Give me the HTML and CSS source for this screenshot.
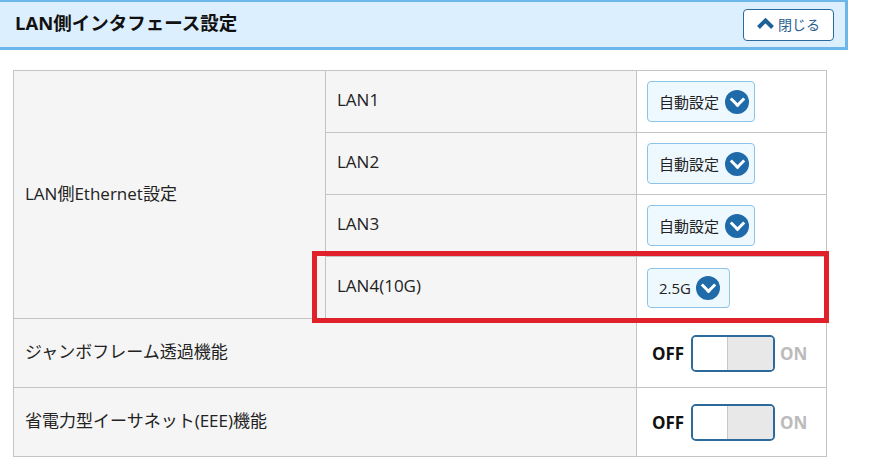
FILE: index.html
```html
<!DOCTYPE html>
<html lang="ja">
<head>
    <meta charset="UTF-8">
    <meta name="viewport" content="width=device-width, initial-scale=1.0">
    <title>LAN側インタフェース設定</title>
    <link rel="stylesheet" href="styles.css">
</head>
<body>

    <div class="section-head">
        <h2>LAN側インタフェース設定</h2>
        <button class="close-btn" type="button">
            <svg width="17" height="11" viewBox="0 0 17 11"><path d="M1.5 9.5 L8.5 2.5 L15.5 9.5" fill="none" stroke="#1f5f98" stroke-width="4"/></svg>
            閉じる
        </button>
    </div>

    <div class="settings">
        <table class="setting-table">
            <tr>
                <th rowspan="4" class="label">LAN側Ethernet設定</th>
                <th class="sub">LAN1</th>
                <td class="value"><span class="select">自動設定<i class="arrow"></i></span></td>
            </tr>
            <tr>
                <th class="sub">LAN2</th>
                <td class="value"><span class="select">自動設定<i class="arrow"></i></span></td>
            </tr>
            <tr>
                <th class="sub">LAN3</th>
                <td class="value"><span class="select">自動設定<i class="arrow"></i></span></td>
            </tr>
            <tr>
                <th class="sub">LAN4(10G)</th>
                <td class="value"><span class="select short">2.5G<i class="arrow"></i></span></td>
            </tr>
            <tr class="tall">
                <th colspan="2" class="label">ジャンボフレーム透過機能</th>
                <td class="value toggle-cell">
                    <span class="off">OFF</span>
                    <span class="toggle"><span class="knob"></span><span class="rest"></span></span>
                    <span class="on">ON</span>
                </td>
            </tr>
            <tr class="tall">
                <th colspan="2" class="label">省電力型イーサネット(EEE)機能</th>
                <td class="value toggle-cell">
                    <span class="off">OFF</span>
                    <span class="toggle"><span class="knob"></span><span class="rest"></span></span>
                    <span class="on">ON</span>
                </td>
            </tr>
        </table>
        <div class="highlight"></div> <!-- annotation box over LAN4 -->
    </div>

</body>
</html>
```

FILE: styles.css
```css
body {
    margin: 0;
    padding: 0;
    font-family: "Open Sans", "Noto Sans CJK JP", sans-serif;
    color: #222;
    background: #fff;
}

.section-head {
    width: 845px;
    height: 45px;
    box-sizing: content-box;
    background-color: #dcefff;
    border-top: 2px solid #6cb6ea;
    border-right: 3px solid #6cb6ea;
    border-bottom: 3px solid #6cb6ea;
    display: flex;
    align-items: center;
    justify-content: space-between;
}

.section-head h2 {
    margin: 0 0 6px 15px;
    font-size: 18.5px;
    font-weight: bold;
    color: #111;
}

.close-btn {
    margin-right: 11px;
    width: 91px;
    height: 32px;
    background: #fff;
    border: 1px solid #2d6a9c;
    border-radius: 4px;
    color: #2a5f8f;
    font-family: inherit;
    font-size: 14px;
    display: flex;
    align-items: center;
    justify-content: center;
    gap: 4px;
    padding: 0 0 2px;
}

.settings {
    position: relative;
    margin: 20px 0 0 13px;
    width: 814px;
}

.setting-table {
    width: 814px;
    border-collapse: collapse;
    font-size: 17px;
}

.setting-table th,
.setting-table td {
    border: 1px solid #c4c4c4;
    height: 61px;
    padding: 0;
    text-align: left;
    font-weight: normal;
}

.setting-table th {
    height: 56px;
    padding-bottom: 5px;
}

.setting-table tr.tall td {
    height: 68px;
}

.setting-table tr.tall th {
    height: 63px;
}

.label {
    width: 300px;
    padding-left: 11px !important;
    background: #f5f5f5;
}

.sub {
    width: 299px;
    padding-left: 11px !important;
    background: #f5f5f5;
}

.value {
    padding-left: 10px !important;
    background: #fff;
}

.select {
    display: inline-flex;
    align-items: center;
    box-sizing: border-box;
    height: 41px;
    width: 108px;
    padding-left: 11px;
    border: 1px solid #8cc4e8;
    border-radius: 4px;
    background: #eef8ff;
    font-size: 15px;
    color: #222;
    gap: 6px;
}

.select.short {
    width: 83px;
    height: 40px;
    gap: 5px;
}

.arrow {
    display: inline-block;
    width: 24px;
    height: 24px;
    border-radius: 50%;
    background: #1f6aa8;
    position: relative;
}

.arrow::after {
    content: "";
    position: absolute;
    left: 6.5px;
    top: 4px;
    width: 8px;
    height: 8px;
    border-right: 3.5px solid #fff;
    border-bottom: 3.5px solid #fff;
    transform: rotate(45deg);
}

.toggle-cell {
    padding-left: 15px !important;
}

.toggle-cell > span {
    vertical-align: middle;
}

.off,
.on {
    font-weight: bold;
    font-size: 17px;
}

.off {
    color: #111;
}

.on {
    color: #bbb;
    margin-left: 1px;
}

.toggle {
    display: inline-flex;
    box-sizing: border-box;
    width: 84px;
    height: 37px;
    margin-left: 2px;
    border: 2px solid #2d6a9c;
    border-radius: 5px;
    overflow: hidden;
}

.knob {
    width: 34px;
    background: #fff;
}

.rest {
    flex: 1;
    background: #e8e8e8;
    border-left: 1px solid #c8c8c8;
}

.highlight {
    position: absolute;
    left: 299px;
    top: 181px;
    width: 507px;
    height: 62px;
    border: 5px solid #e0202a;
}
```
